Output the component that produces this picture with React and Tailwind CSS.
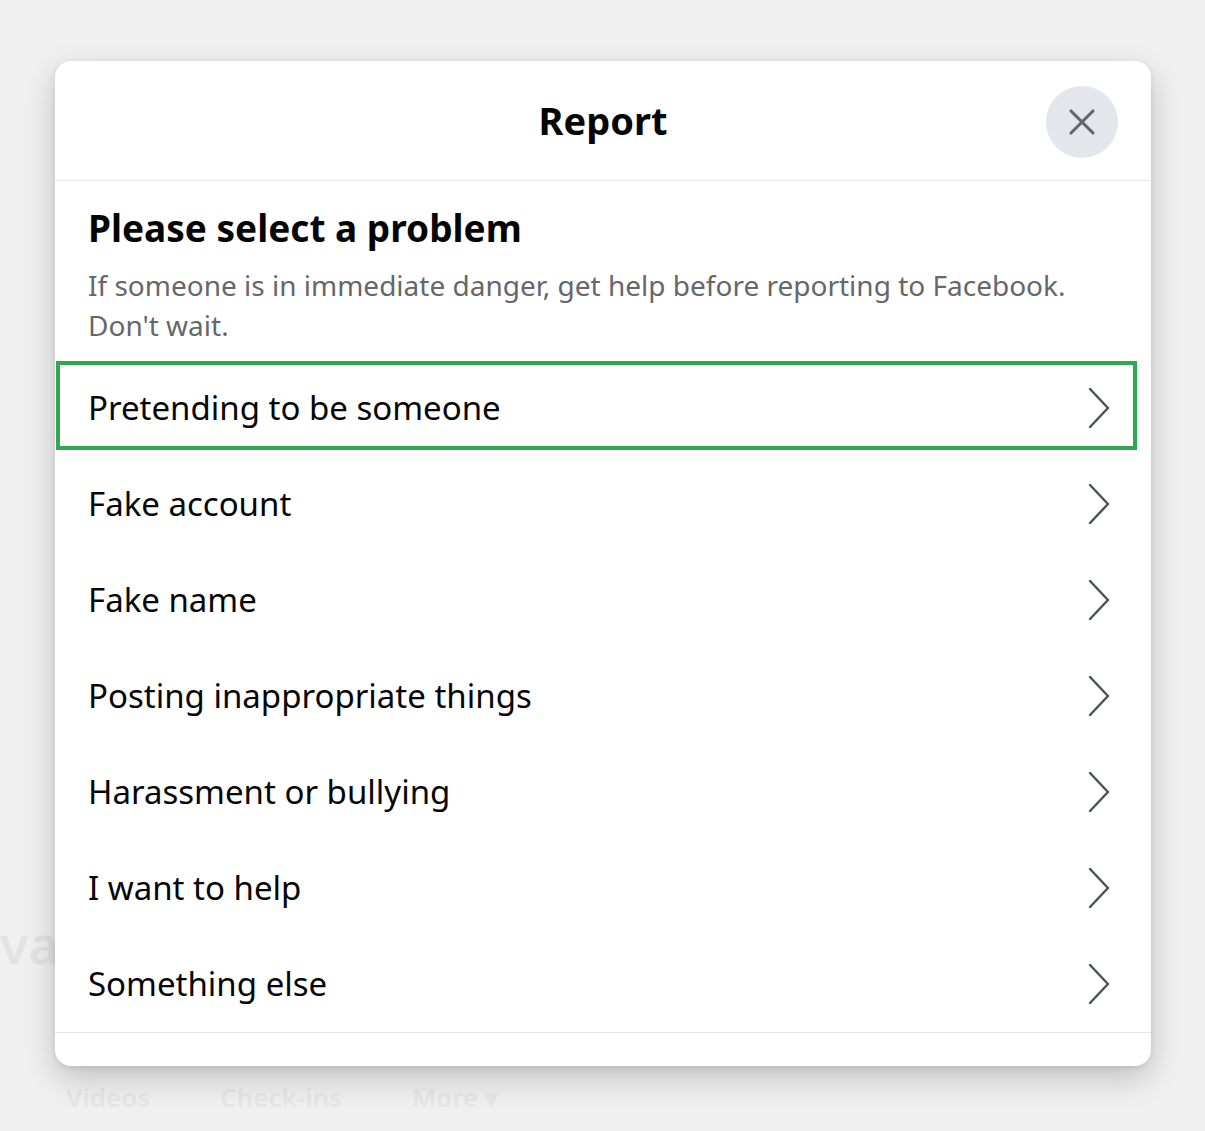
import { X } from "lucide-react";

const problems = [
  "Pretending to be someone",
  "Fake account",
  "Fake name",
  "Posting inappropriate things",
  "Harassment or bullying",
  "I want to help",
  "Something else",
];

const font = { fontFamily: "'Noto Sans', 'Open Sans', Arial, sans-serif" };

function Chevron() {
  return (
    <svg width="24" height="42" viewBox="0 0 24 42" fill="none" className="text-[#4b4f56]">
      <polyline points="3,2 21,21 3,40" stroke="currentColor" strokeWidth="2.4" strokeLinecap="round" strokeLinejoin="round" />
    </svg>
  );
}

export default function App() {
  return (
    <div className="relative h-[1131px] w-full overflow-hidden bg-[#f0f0f0] pt-[61px]" style={font}>
      {/* page behind the overlay */}
      <div className="absolute left-0 top-[905px] text-[52px] font-semibold text-[#e3e3e3]">va</div>
      <div className="absolute left-[66px] top-[1078px] flex gap-[70px] text-[26px] font-semibold text-[#e6e6e6]">
        <span>Videos</span>
        <span>Check-ins</span>
        <span>More ▾</span>
      </div>

      <div className="relative ml-[55px] w-[1096px] rounded-[16px] bg-white shadow-[0_12px_32px_rgba(0,0,0,0.2),0_2px_6px_rgba(0,0,0,0.08)]">
        {/* header */}
        <div className="relative flex h-[120px] items-center justify-center border-b border-[#e4e6eb]">
          <h1 className="text-[38px] font-bold text-[#050505]">Report</h1>
          <button className="absolute right-[33px] top-[25px] flex h-[72px] w-[72px] items-center justify-center rounded-full bg-[#e4e6eb]">
            <X className="h-[44px] w-[44px] text-[#606770]" strokeWidth={1.7} />
          </button>
        </div>

        {/* intro */}
        <div className="px-[33px] pt-[23px] pb-[15px]">
          <h2 className="text-[37px] font-bold leading-[48px] text-[#050505]">Please select a problem</h2>
          <p className="mt-[13px] text-[28px] leading-[40px] text-[#65676b]">
            If someone is in immediate danger, get help before reporting to Facebook. Don't wait.
          </p>
        </div>

        {/* options */}
        <div className="border-b border-[#e4e6eb]">
          {problems.map((p, i) => (
            <div key={p} className="relative flex h-[96px] items-center justify-between pl-[33px] pr-[40px]">
              {i === 0 && (
                <div className="pointer-events-none absolute left-[1px] right-[14px] top-[1px] bottom-[6px] border-[4px] border-[#2ea94f]" />
              )}
              <span className="text-[33px] text-[#050505]">{p}</span>
              <Chevron />
            </div>
          ))}
        </div>
        <div className="h-[33px]" />
      </div>
    </div>
  );
}
